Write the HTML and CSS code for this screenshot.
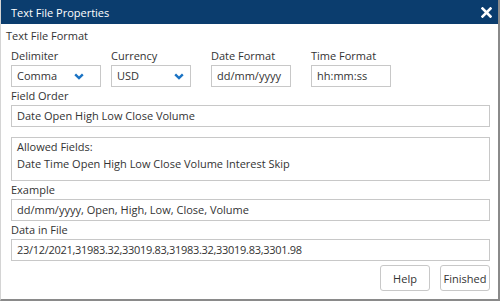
FILE: index.html
```html
<!DOCTYPE html>
<html lang="en">
<head>
    <meta charset="UTF-8">
    <title>Text File Properties</title>
    <link rel="stylesheet" href="styles.css">
</head>
<body>
    <div class="dialog">
        <div class="titlebar">
            <span>Text File Properties</span>
            <svg class="close" width="11" height="11" viewBox="0 0 11 11">
                <path d="M1.5 1.5 L9.5 9.5 M9.5 1.5 L1.5 9.5" stroke="#fff" stroke-width="2.6" stroke-linecap="square"/>
            </svg>
        </div>

        <div class="content">
            <div class="section-title">Text File Format</div>

            <div class="format-row">
                <div class="field">
                    <label>Delimiter</label>
                    <div class="select wide">
                        <span>Comma</span>
                        <svg width="10" height="7" viewBox="0 0 10 7"><path d="M1.2 1.3 L5 5 L8.8 1.3" fill="none" stroke="#1a73c4" stroke-width="2.4"/></svg>
                    </div>
                </div>
                <div class="field">
                    <label>Currency</label>
                    <div class="select">
                        <span>USD</span>
                        <svg width="10" height="7" viewBox="0 0 10 7"><path d="M1.2 1.3 L5 5 L8.8 1.3" fill="none" stroke="#1a73c4" stroke-width="2.4"/></svg>
                    </div>
                </div>
                <div class="field">
                    <label>Date Format</label>
                    <div class="input">dd/mm/yyyy</div>
                </div>
                <div class="field">
                    <label>Time Format</label>
                    <div class="input">hh:mm:ss</div>
                </div>
            </div>

            <label>Field Order</label>
            <div class="input">Date Open High Low Close Volume</div>

            <div class="allowed">
                <div>Allowed Fields:</div>
                <div>Date Time Open High Low Close Volume Interest Skip</div>
            </div>

            <label>Example</label>
            <div class="input">dd/mm/yyyy, Open, High, Low, Close, Volume</div>

            <label>Data in File</label>
            <div class="input data">23/12/2021,31983.32,33019.83,31983.32,33019.83,3301.98</div>

            <div class="buttons">
                <button>Help</button>
                <button>Finished</button>
            </div>
        </div>
    </div>
</body>
</html>
```

FILE: styles.css
```css
body {
    margin: 0;
    font-family: "Open Sans", "Liberation Sans", sans-serif;
    font-size: 11px;
    color: #333;
    background: #fff;
}
.dialog {
    box-sizing: border-box;
    width: 500px;
    height: 301px;
    border-left: 1px solid #d4d4d4;
    border-right: 2px solid #8a8a8a;
    border-bottom: 2px solid #8a8a8a;
}
.titlebar {
    height: 24px;
    background-color: #0b3d6e;
    color: #fff;
    display: flex;
    align-items: center;
    justify-content: space-between;
    padding: 0 6px 0 10px;
}
.content {
    padding: 3px 8px 0 10px;
}
.section-title {
    line-height: 18px;
    margin: 0 0 2px -5px;
}
label {
    display: block;
    line-height: 18px;
}
.format-row {
    display: flex;
}
.field {
    width: 100px;
}
.field .input,
.field .select {
    width: 80px;
}
.field .select.wide {
    width: 90px;
    padding-right: 16px;
}
.select,
.input {
    box-sizing: border-box;
    height: 22px;
    border: 1px solid #c8c8c8;
    padding: 0 5px;
    line-height: 20px;
    white-space: nowrap;
    overflow: hidden;
}
.select {
    display: flex;
    align-items: center;
    justify-content: space-between;
    padding-right: 6px;
}
.input.data {
    letter-spacing: -0.3px;
}
.allowed {
    box-sizing: border-box;
    height: 44px;
    margin-top: 10px;
    border: 1px solid #c8c8c8;
    padding: 0 5px;
    line-height: 17px;
}
.buttons {
    display: flex;
    justify-content: flex-end;
    gap: 10px;
    margin-top: 4px;
}
.buttons button {
    box-sizing: border-box;
    width: 50px;
    height: 26px;
    padding: 0;
    background: #fff;
    border: 1px solid #c8c8c8;
    border-radius: 3px;
    font-family: inherit;
    font-size: 11px;
    color: #333;
}
```
